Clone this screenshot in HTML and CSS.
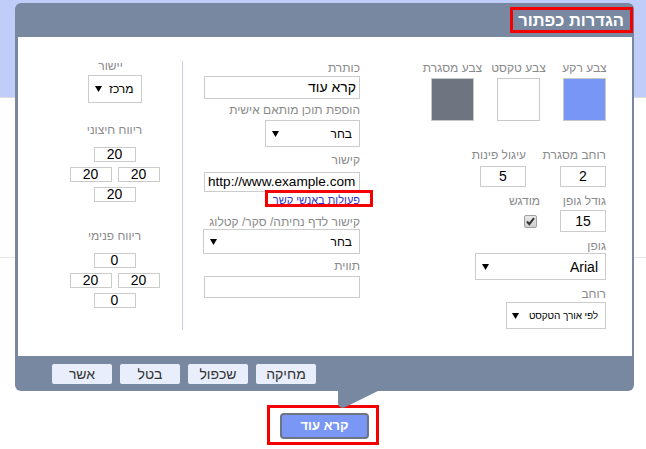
FILE: index.html
```
<!DOCTYPE html>
<html lang="he" dir="rtl">
<head>
<meta charset="utf-8">
<title>הגדרות כפתור</title>
<link rel="stylesheet" href="styles.css">
</head>
<body>
<div class="dialog">
  <div class="dialog-header">
    <div class="title">הגדרות כפתור</div>
  </div>
  <div class="dialog-body">
    <div class="col col-style">
      <div class="swatches">
        <div class="swatch-cell">
          <div class="label">צבע רקע</div>
          <div class="swatch swatch-bg"></div>
        </div>
        <div class="swatch-cell">
          <div class="label">צבע טקסט</div>
          <div class="swatch swatch-text"></div>
        </div>
        <div class="swatch-cell">
          <div class="label">צבע מסגרת</div>
          <div class="swatch swatch-border"></div>
        </div>
      </div>
      <div class="pair pair-border">
        <div class="cell cell-w80">
          <div class="label">רוחב מסגרת</div>
          <div class="field field-num field-num-a">2</div>
        </div>
        <div class="cell">
          <div class="label">עיגול פינות</div>
          <div class="field field-num field-num-a">5</div>
        </div>
      </div>
      <div class="pair pair-font">
        <div class="cell cell-w66">
          <div class="label">גודל גופן</div>
          <div class="field field-num field-num-b">15</div>
        </div>
        <div class="cell">
          <div class="label">מודגש</div>
          <span class="checkbox"><svg width="11" height="11" viewBox="0 0 11 11"><path d="M2 5.5 L4.3 8.2 L9 2.2" fill="none" stroke="#333" stroke-width="2"/></svg></span>
        </div>
      </div>
      <div class="group">
        <div class="label">גופן</div>
        <div class="select select-font"><span>Arial</span><svg class="arrow" width="7" height="6" viewBox="0 0 7 6"><path d="M0 0H7L3.5 6Z"/></svg></div>
      </div>
      <div class="group">
        <div class="label">רוחב</div>
        <div class="select select-width"><span class="tiny">לפי אורך הטקסט</span><svg class="arrow" width="7" height="6" viewBox="0 0 7 6"><path d="M0 0H7L3.5 6Z"/></svg></div>
      </div>
    </div>

    <div class="col col-content">
      <div class="label">כותרת</div>
      <div class="field field-wide field-title">קרא עוד</div>
      <div class="label label-gap4">הוספת תוכן מותאם אישית</div>
      <div class="select select-custom"><span class="small">בחר</span><svg class="arrow" width="7" height="6" viewBox="0 0 7 6"><path d="M0 0H7L3.5 6Z"/></svg></div>
      <div class="label label-gap6">קישור</div>
      <div class="field field-wide field-url" dir="ltr">http://www.example.com</div>
      <div class="link-row"><a class="link" href="#">פעולות באנשי קשר</a></div>
      <div class="label label-gap10">קישור לדף נחיתה/ סקר/ קטלוג</div>
      <div class="select select-landing"><span class="small">בחר</span><svg class="arrow" width="7" height="6" viewBox="0 0 7 6"><path d="M0 0H7L3.5 6Z"/></svg></div>
      <div class="label label-gap5">תווית</div>
      <div class="field field-wide field-tag"></div>
    </div>

    <div class="col col-spacing">
      <div class="label label-align">יישור</div>
      <div class="select select-align"><span class="small">מרכז</span><svg class="arrow" width="7" height="6" viewBox="0 0 7 6"><path d="M0 0H7L3.5 6Z"/></svg></div>
      <div class="label label-gap20">ריווח חיצוני</div>
      <div class="box-grid">
        <div class="mini">20</div>
        <div class="mini-row"><div class="mini">20</div><div class="mini">20</div></div>
        <div class="mini">20</div>
      </div>
      <div class="label label-gap27">ריווח פנימי</div>
      <div class="box-grid">
        <div class="mini">0</div>
        <div class="mini-row"><div class="mini">20</div><div class="mini">20</div></div>
        <div class="mini">0</div>
      </div>
    </div>
  </div>
  <div class="dialog-footer">
    <button class="btn">מחיקה</button>
    <button class="btn">שכפול</button>
    <button class="btn">בטל</button>
    <button class="btn">אשר</button>
  </div>
  <svg class="tail" width="44" height="20" viewBox="0 0 44 20"><path d="M0 0H42L8.5 16.5Q5 18.5 2.5 17.2Q0 16 0 14Z" fill="#7788a0"/></svg>
</div>
<div class="cta-wrap">
  <div class="cta-frame"><button class="cta">קרא עוד</button></div>
</div>
</body>
</html>
```
FILE: styles.css
```
html, body {
  margin: 0;
  padding: 0;
}
body {
  width: 646px;
  height: 449px;
  overflow: hidden;
  font-family: "Liberation Sans", Arial, "DejaVu Sans", sans-serif;
  background: linear-gradient(to bottom,
    #c0cdf8 0, #c0cdf8 97px,
    #dedede 97px, #dedede 98px,
    #ffffff 98px, #ffffff 257px,
    #e6e6e6 257px, #e6e6e6 258px,
    #ffffff 258px);
}

.dialog {
  position: relative;
  margin: 3px 12px 0 15px;
  width: 619px;
  background: #7788a0;
  border-radius: 6px;
}
.dialog-header {
  height: 34px;
  display: flex;
  justify-content: flex-start;
  align-items: flex-start;
  padding-right: 1px;
}
.title {
  margin-top: 4px;
  border: 3px solid #f40000;
  padding: 0 6px 0 5px;
  height: 20px;
  line-height: 20px;
  color: #fff;
  font-weight: bold;
  font-size: 16.5px;
  white-space: nowrap;
}

.dialog-body {
  margin: 0 2px 0 3px;
  height: 319px;
  box-sizing: border-box;
  background: #fff;
  display: flex;
  align-items: flex-start;
  padding: 24px 26px 0 0;
}

.label {
  font-size: 12px;
  line-height: 14px;
  color: #8a8a8a;
  white-space: nowrap;
}
.label-gap4 { margin-top: 4px; }
.label-gap5 { margin-top: 5px; }
.label-gap6 { margin-top: 6px; }
.label-gap10 { margin-top: 10px; }
.label-gap20 { margin-top: 20px; }
.label-gap27 { margin-top: 27px; }
.label-align { margin-right: 8px; }

/* right column */
.col-style {
  width: 181px;
  display: flex;
  flex-direction: column;
  align-items: flex-start;
}
.swatches {
  display: flex;
  gap: 23px;
}
.swatch-cell {
  width: 43px;
  display: flex;
  flex-direction: column;
  align-items: center;
}
.swatch {
  margin-top: 3px;
  width: 41px;
  height: 41px;
  border: 1px solid #c9c9c9;
}
.swatch-bg { background: #7896f5; }
.swatch-text { background: #fff; }
.swatch-border { background: #6e7580; }

.pair {
  display: flex;
}
.pair-border { margin-top: 27px; }
.pair-font { margin-top: 7px; }
.cell {
  display: flex;
  flex-direction: column;
  align-items: flex-start;
}
.cell-w80 { width: 80px; }
.cell-w66 { width: 66px; }

.field {
  box-sizing: border-box;
  border: 1px solid #cccccc;
  background: #fff;
  color: #000;
  font-size: 14px;
  white-space: nowrap;
  overflow: hidden;
}
.field-num {
  width: 46px;
  text-align: center;
}
.field-num-a {
  margin-top: 4px;
  height: 21px;
  line-height: 19px;
}
.field-num-b {
  margin-top: 2px;
  height: 22px;
  line-height: 20px;
}
.checkbox {
  margin: 7px 3px 0 0;
  width: 13px;
  height: 13px;
  box-sizing: border-box;
  border: 1px solid #a0a0a0;
  border-radius: 2px;
  background: linear-gradient(#e8e8e8, #cfcfcf);
  display: flex;
  align-items: center;
  justify-content: center;
}

.group {
  margin-top: 7px;
  display: flex;
  flex-direction: column;
  align-items: flex-start;
}

.select {
  box-sizing: border-box;
  border: 1px solid #cccccc;
  background: #fff;
  color: #000;
  font-size: 14px;
  display: flex;
  align-items: center;
  justify-content: space-between;
  padding: 0 7px 0 6px;
  white-space: nowrap;
  overflow: hidden;
}
.select .small { font-size: 12px; }
.select .tiny { font-size: 10px; letter-spacing: -0.1px; }
.arrow { flex: none; fill: #000; }
.select-font { width: 131px; height: 27px; }
.select-width { width: 100px; height: 27px; margin-top: 1px; padding-left: 5px; }

/* middle column */
.col-content {
  margin-right: 65px;
  width: 157px;
  height: 269px;
  padding-left: 20px;
  border-left: 1px solid #c8cfe0;
  display: flex;
  flex-direction: column;
  align-items: flex-start;
}
.field-wide {
  width: 156px;
  padding: 0 3px;
}
.field-title {
  margin-top: 1px;
  height: 23px;
  line-height: 21px;
}
.select-custom {
  margin-top: 3px;
  width: 95px;
  height: 27px;
}
.field-url {
  margin-top: 5px;
  height: 20px;
  line-height: 18px;
  font-size: 13.6px;
  text-align: left;
}
.link-row {
  position: relative;
  align-self: stretch;
  line-height: 13px;
  height: 13px;
}
.link-row::after {
  content: "";
  position: absolute;
  top: -2px;
  bottom: -2px;
  right: -13px;
  left: 62px;
  border: 3px solid #f40000;
}
.link {
  font-size: 11px;
  color: #3333cc;
  text-decoration: none;
}
.select-landing {
  width: 157px;
  height: 25px;
}
.field-tag {
  margin-top: 3px;
  height: 22px;
}

/* left column */
.col-spacing {
  width: 135px;
  margin-top: -2px;
  display: flex;
  flex-direction: column;
  align-items: center;
}
.select-align {
  margin-top: 2px;
  width: 54px;
  height: 28px;
}
.box-grid {
  margin-top: 10px;
  display: flex;
  flex-direction: column;
  align-items: center;
  gap: 5px;
}
.mini-row {
  display: flex;
  gap: 6px;
}
.mini {
  box-sizing: border-box;
  width: 42px;
  height: 15px;
  border: 1px solid #cccccc;
  font-size: 14px;
  line-height: 13px;
  text-align: center;
  color: #000;
}

/* footer */
.dialog-footer {
  height: 35px;
  box-sizing: border-box;
  padding: 8px 0 0 37px;
  display: flex;
  justify-content: flex-end;
  align-items: flex-start;
  gap: 8px;
}
.btn {
  width: 60px;
  height: 20px;
  padding: 0;
  border: none;
  border-radius: 2px;
  background: #e8eefb;
  color: #333;
  font-family: "Liberation Sans", Arial, sans-serif;
  font-size: 14px;
  line-height: 20px;
}

.tail {
  position: absolute;
  left: 323px;
  top: 387px;
}

.cta-wrap {
  margin: 14px 0 0 267px;
  direction: ltr;
}
.cta-frame {
  display: inline-block;
  border: 3px solid #f40000;
  padding: 5px 7px 3px 10px;
  line-height: 0;
}
.cta {
  width: 89px;
  height: 26px;
  box-sizing: border-box;
  border: 2px solid #6d7585;
  border-radius: 4px;
  background: #7b97f5;
  color: #fff;
  font-family: "Liberation Sans", Arial, sans-serif;
  font-weight: bold;
  font-size: 13px;
  line-height: 22px;
  padding: 0;
}
```
